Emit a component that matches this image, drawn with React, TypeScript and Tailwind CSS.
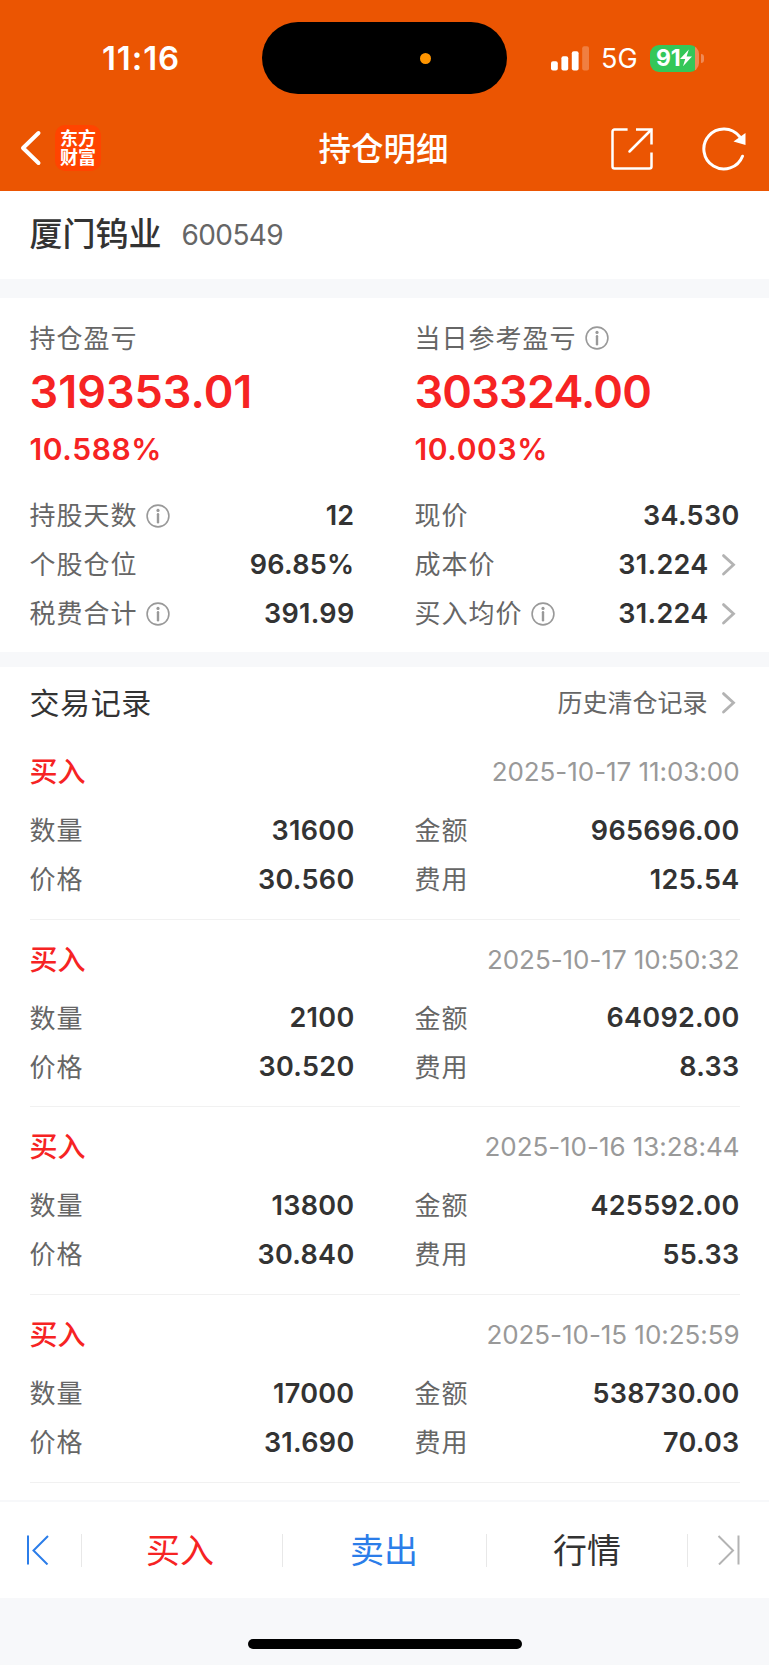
import React from 'react'
import clsx from 'clsx'

interface Trade {
  time: string
  quantity: string
  amount: string
  price: string
  fee: string
}

const trades: Trade[] = [
  { time: '2025-10-17 11:03:00', quantity: '31600', amount: '965696.00', price: '30.560', fee: '125.54' },
  { time: '2025-10-17 10:50:32', quantity: '2100', amount: '64092.00', price: '30.520', fee: '8.33' },
  { time: '2025-10-16 13:28:44', quantity: '13800', amount: '425592.00', price: '30.840', fee: '55.33' },
  { time: '2025-10-15 10:25:59', quantity: '17000', amount: '538730.00', price: '31.690', fee: '70.03' },
]

function InfoIcon() {
  return (
    <svg className="ml-2 h-6 w-6 shrink-0" viewBox="0 0 24 24" fill="none">
      <circle cx="12" cy="12" r="10.9" stroke="#999" strokeWidth="1.6" />
      <circle cx="12" cy="6.4" r="1.6" fill="#999" />
      <path d="M12 10.2v8" stroke="#999" strokeWidth="2.4" strokeLinecap="round" />
    </svg>
  )
}

function ChevronRight() {
  return (
    <svg className="h-6 w-[31px] shrink-0" viewBox="0 0 31 24" fill="none">
      <path d="M14.5 2.6l10 9.200l-10 9.200" stroke="#b3b3b3" strokeWidth="2.8" strokeLinecap="round" />
    </svg>
  )
}

interface RowProps {
  label: string
  value: string
  info?: boolean
  link?: boolean
}

function Row({ label, value, info, link }: RowProps) {
  return (
    <div className="flex h-[49px] items-center">
      <span className="text-[26px] tracking-[1px] text-[#666]">{label}</span>
      {info && <InfoIcon />}
      <span className="ml-auto pt-px text-[27px] font-semibold tracking-[0.3px] text-[#333]">{value}</span>
      {link && <ChevronRight />}
    </div>
  )
}

interface ProfitProps {
  label: string
  value: string
  percent: string
  info?: boolean
  valueClassName?: string
}

function Profit({ label, value, percent, info, valueClassName }: ProfitProps) {
  return (
    <div>
      <div className="flex h-10 items-center">
        <span className="text-[26px] tracking-[1px] text-[#666]">{label}</span>
        {info && <InfoIcon />}
      </div>
      <div className={clsx('flex h-[68px] items-center text-[45px] font-semibold text-[#f62323]', valueClassName)}>
        {value}
      </div>
      <div className="flex h-[46px] items-center text-[30px] font-semibold tracking-[0.6px] text-[#f62323]">
        {percent}
      </div>
    </div>
  )
}

function StatusBar() {
  return (
    <div className="flex h-[116px] items-center">
      <div className="w-[262px] pl-[102px] pt-px text-[33px] font-semibold tracking-[0.9px] text-white">11:16</div>
      {/* Dynamic island */}
      <div className="flex h-[72px] w-[245px] items-center rounded-full bg-black pl-[158px]">
        <div className="h-[11px] w-[11px] rounded-full bg-[#ff9500]" />
      </div>
      <svg className="ml-11 h-[25px] w-[38px]" viewBox="0 0 38 25">
        <rect x="0" y="15.3" width="6.8" height="9.2" rx="2" fill="#fff" />
        <rect x="10.4" y="10.2" width="6.8" height="14.3" rx="2" fill="#fff" />
        <rect x="20.8" y="5.2" width="6.8" height="19.3" rx="2" fill="#fff" />
        <rect x="31.2" y="0.2" width="6.8" height="24.3" rx="2" fill="#fff" fillOpacity="0.25" />
      </svg>
      <span className="ml-[12px] w-[38px] whitespace-nowrap pt-[3px] text-[27px] text-white">5G</span>
      <div className="ml-[11px] flex items-center">
        <div className="flex h-[27px] w-[49px] items-center overflow-hidden rounded-[9px] bg-[linear-gradient(to_right,#34c759_44.5px,#f08a55_44.5px)] pl-[6px]">
          <span className="text-[23px] font-bold tracking-[-0.3px] text-white">91</span>
          <svg className="h-[18px] w-3 shrink-0" viewBox="0 0 12 18">
            <path d="M8.8 0.5L0 10h5.2L3 17.3L12 7.6H6.6z" fill="#fff" />
          </svg>
        </div>
        <div className="ml-[2px] h-[9px] w-[3px] rounded-r-full bg-[#f08a55]" />
      </div>
    </div>
  )
}

function Header() {
  return (
    <header className="h-[191px] bg-[#eb5502]">
      <StatusBar />
      <div className="grid h-[64px] grid-cols-3 items-center">
        <div className="flex items-center pl-[20px]">
          <svg className="h-9 w-[22px]" viewBox="0 0 22 36" fill="none">
            <path d="M18.5 3L3 18l15.5 15" stroke="#fff" strokeWidth="4" strokeLinecap="round" strokeLinejoin="round" />
          </svg>
          <div className="ml-[13px] flex h-[46px] w-[46px] flex-col items-center justify-center rounded-[10px] bg-[#ff4400] text-[18px] font-bold leading-[19px] text-white">
            <span>东方</span>
            <span>财富</span>
          </div>
        </div>
        <h1 className="pr-0.5 pt-1 text-center text-[32.5px] font-medium text-white">持仓明细</h1>
        <div className="flex items-center justify-end pr-[21px]">
          <svg className="mt-px h-[44px] w-[44px]" viewBox="0 0 44 44" fill="none" stroke="#fff" strokeWidth="2.5">
            <path d="M17.6 2.5H4.5a2 2 0 0 0-2 2V39.5a2 2 0 0 0 2 2H39.5a2 2 0 0 0 2-2V25.500" />
            <path d="M26 2.5H41.5V17.5" />
            <path d="M41 3L19.5 24.5" strokeLinecap="round" />
          </svg>
          <svg className="ml-[48px] h-[46px] w-[46px]" viewBox="0 0 46 46" fill="none">
            <path d="M40.5 31.2A20 20 0 1 1 37.5 11.5" stroke="#fff" strokeWidth="3" strokeLinecap="round" />
            <path d="M43.5 8V20L31.5 16.5z" fill="#fff" />
          </svg>
        </div>
      </div>
    </header>
  )
}

function TradeItem({ trade }: { trade: Trade }) {
  return (
    <div className="h-[187.67px] border-b border-[#f1f1f1] pt-5">
      <div className="flex h-10 items-center justify-between">
        <span className="text-[28px] font-medium text-[#f62323]">买入</span>
        <span className="pb-px text-[26px] tracking-[-0.05px] text-[#999]">{trade.time}</span>
      </div>
      <div className="mt-[14px] grid grid-cols-2 gap-x-[60px]">
        <Row label="数量" value={trade.quantity} />
        <Row label="金额" value={trade.amount} />
        <Row label="价格" value={trade.price} />
        <Row label="费用" value={trade.fee} />
      </div>
    </div>
  )
}

function BottomNav() {
  const items = [
    { label: '买入', className: 'w-[201px] pr-1 text-[#f62323]' },
    { label: '卖出', className: 'w-[204px] pr-px text-[#2b7de9]' },
    { label: '行情', className: 'w-[201px] text-[#333]' },
  ]

  return (
    <nav className="flex h-[98px] items-center border-t-2 border-[#f7f8fa] bg-white">
      <div className="flex h-[33px] w-[82px] items-center border-r border-[#e8e8e8] pl-[25px]">
        <svg className="h-[30px] w-6" viewBox="0 0 24 30" fill="none" stroke="#2b7de9" strokeWidth="2">
          <path d="M3 0.5V29.5" />
          <path d="M23 1L8.500 15.500L22.500 29.500" />
        </svg>
      </div>
      {items.map((item) => (
        <div
          key={item.label}
          className={clsx('flex h-[33px] items-center justify-center border-r border-[#e8e8e8] text-[34px]', item.className)}
        >
          {item.label}
        </div>
      ))}
      <svg className="ml-[29px] h-[30px] w-6" viewBox="0 0 24 30" fill="none" stroke="#b3b3b3" strokeWidth="2">
        <path d="M1.5 1L16 15.5L2 29.500" />
        <path d="M21.5 0.5V29.5" />
      </svg>
    </nav>
  )
}

export default function App() {
  return (
    <div className="flex h-[1665px] w-[769px] flex-col overflow-hidden bg-white font-['Inter','Noto_Sans_CJK_SC',sans-serif]">
      <Header />

      {/* Stock name */}
      <div className="flex h-[88px] items-center px-[29.5px]">
        <span className="text-[33px] font-medium text-[#333]">厦门钨业</span>
        <span className="ml-5 text-[28px] tracking-[-0.6px] text-[#666]">600549</span>
      </div>
      <div className="h-[19px] bg-[#f7f8fa]" />

      {/* Position summary */}
      <section className="h-[354px] px-[29.5px] pt-5">
        <div className="grid grid-cols-2 gap-x-[60px]">
          <Profit label="持仓盈亏" value="319353.01" percent="10.588%" />
          <Profit label="当日参考盈亏" value="303324.00" percent="10.003%" valueClassName="tracking-[-0.8px]" info />
        </div>
        <div className="mt-[19px] grid grid-cols-2 gap-x-[60px]">
          <Row label="持股天数" value="12" info />
          <Row label="现价" value="34.530" />
          <Row label="个股仓位" value="96.85%" />
          <Row label="成本价" value="31.224" link />
          <Row label="税费合计" value="391.99" info />
          <Row label="买入均价" value="31.224" info link />
        </div>
      </section>
      <div className="h-[15px] bg-[#f7f8fa]" />

      {/* Trade records */}
      <section className="flex-1 px-[29.5px]">
        <div className="flex h-[65px] items-center justify-between pt-[7px]">
          <h2 className="text-[30px] tracking-[0.6px] text-[#333]">交易记录</h2>
          <div className="flex items-center">
            <span className="pr-px pt-px text-[25px] text-[#666]">历史清仓记录</span>
            <ChevronRight />
          </div>
        </div>
        {trades.map((trade) => (
          <TradeItem key={trade.time} trade={trade} />
        ))}
      </section>

      <BottomNav />
      <div className="flex h-[67px] justify-center bg-[#f7f8fa] pt-[41px]">
        <div className="h-[10px] w-[274px] rounded-full bg-black" />
      </div>
    </div>
  )
}
